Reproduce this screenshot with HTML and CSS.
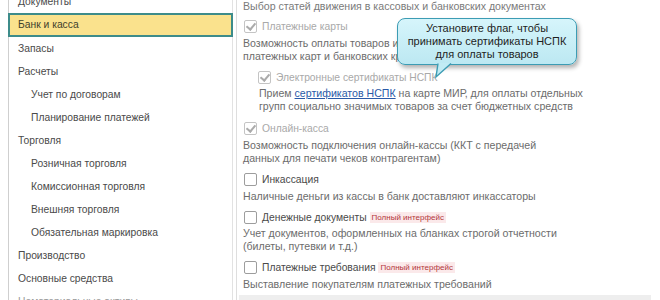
FILE: index.html
```html
<!DOCTYPE html>
<html lang="ru">
<head>
    <meta charset="UTF-8">
    <title>Банк и касса</title>
    <link rel="stylesheet" href="styles.css">
</head>
<body>

    <div class="page">
        <!-- левое меню разделов -->
        <ul class="sections">
            <li>Документы</li>
            <li class="active">Банк и касса</li>
            <li>Запасы</li>
            <li>Расчеты</li>
            <li class="sub">Учет по договорам</li>
            <li class="sub">Планирование платежей</li>
            <li>Торговля</li>
            <li class="sub">Розничная торговля</li>
            <li class="sub">Комиссионная торговля</li>
            <li class="sub">Внешняя торговля</li>
            <li class="sub">Обязательная маркировка</li>
            <li>Производство</li>
            <li>Основные средства</li>
            <li class="faded">Нематериальные активы</li>
        </ul>

        <div class="settings">
            <p class="desc first">Выбор статей движения в кассовых и банковских документах</p>

            <label class="check disabled top"><span class="box on"></span>Платежные карты</label>
            <p class="desc">Возможность оплаты товаров и услуг с использованием<br>платежных карт и банковских кредитов</p>

            <label class="check disabled nested"><span class="box on"></span>Электронные сертификаты НСПК</label>
            <p class="desc nested">Прием <a href="#">сертификатов НСПК</a> на карте МИР, для оплаты отдельных<br>групп социально значимых товаров за счет бюджетных средств</p>

            <label class="check disabled wide"><span class="box on"></span>Онлайн-касса</label>
            <p class="desc">Возможность подключения онлайн-кассы (ККТ с передачей<br>данных для печати чеков контрагентам)</p>

            <label class="check"><span class="box"></span>Инкассация</label>
            <p class="desc">Наличные деньги из кассы в банк доставляют инкассаторы</p>

            <label class="check"><span class="box"></span>Денежные документы <span class="badge">Полный интерфейс</span></label>
            <p class="desc tight">Учет документов, оформленных на бланках строгой отчетности<br>(билеты, путевки и т.д.)</p>

            <label class="check"><span class="box"></span>Платежные требования <span class="badge">Полный интерфейс</span></label>
            <p class="desc">Выставление покупателям платежных требований</p>

            <div class="footer-bar"></div>
        </div>
    </div>

    <div class="hint">
        Установите флаг, чтобы<br>принимать сертификаты НСПК<br>для оплаты товаров
        <svg class="hint-tail" width="24" height="16" viewBox="0 0 24 16">
            <polygon points="3,0 16,0 1,14" fill="#c1ebf4"/>
            <polyline points="3,0.5 1,14 16,0.5" fill="none" stroke="#3c9cb4" stroke-width="1.4"/>
        </svg>
    </div>

</body>
</html>
```

FILE: styles.css
```css
body {
    margin: 0;
    background: #fff;
    font-family: "Liberation Sans", Arial, sans-serif;
    font-size: 10.3px;
    color: #4a4a4a;
    overflow: hidden;
}
.page {
    display: flex;
    align-items: flex-start;
    height: 300px;
    overflow: hidden;
}
.sections {
    list-style: none;
    margin: -10px 0 0 8px;
    padding: 0;
    width: 223px;
    height: 310px;
    border-left: 1px solid #cfcfcf;
    border-right: 1px solid #e2e2e2;
}
.sections li {
    height: 23px;
    line-height: 23px;
    padding-left: 9px;
    white-space: nowrap;
}
.sections li.sub {
    padding-left: 22px;
}
.sections li.active {
    height: 20px;
    line-height: 20px;
    margin: 0 -1px 0 -1px;
    padding-left: 8px;
    background: #fae28d;
    border: 2px solid #3d8c8a;
    color: #3f3f2c;
}
.sections li.faded {
    color: #9a9a9a;
}
.settings {
    margin-left: 3px;
    width: 406px;
    height: 310px;
    padding-left: 6px;
    border-left: 1px solid #dedede;
    display: flex;
    flex-direction: column;
}
.settings > * {
    flex-shrink: 0;
}
.desc {
    margin: 1px 0 0;
    font-size: 10.6px;
    line-height: 13px;
    color: #6c6c6c;
    white-space: nowrap;
}
.desc.first {
    margin-top: 0;
    color: #7a7a7a;
}
.desc.tight,
.desc.nested {
    margin-top: 0;
}
.desc.nested {
    padding-left: 16px;
}
.desc a {
    color: #2a5aa8;
}
.check {
    display: flex;
    align-items: center;
    height: 20px;
    margin-top: 4px;
    padding-left: 1px;
    color: #4a4a4a;
    white-space: nowrap;
}
.check.top {
    margin-top: 3px;
}
.check.nested {
    padding-left: 15px;
}
.check.wide {
    margin-top: 5px;
}
.check.disabled {
    color: #a9a9a9;
}
.box {
    width: 11px;
    height: 11px;
    margin-right: 5px;
    border: 1px solid #9d9d9d;
    border-radius: 2px;
    background: #fff;
    position: relative;
}
.check.disabled .box {
    border-color: #c4c4c4;
}
.box.on::after {
    content: "";
    position: absolute;
    left: 3px;
    top: 0;
    width: 4px;
    height: 7px;
    border-right: 2px solid #ababab;
    border-bottom: 2px solid #ababab;
    transform: rotate(40deg);
}
.badge {
    margin-left: 3px;
    padding: 0 2px;
    font-size: 8px;
    line-height: 11px;
    color: #b3363a;
    background: #fbe9ea;
}
.footer-bar {
    margin: 4px 0 0 -4px;
    width: 412px;
    height: 10px;
    background: #eeeeee;
}
.hint {
    position: absolute;
    left: 397px;
    top: 18px;
    width: 180px;
    height: 47px;
    padding-top: 3px;
    box-sizing: border-box;
    border: 1.5px solid #3c9cb4;
    border-radius: 8px;
    background: linear-gradient(#d6f5fb, #bce8f2);
    box-shadow: 2px 3px 4px rgba(0, 0, 0, 0.3);
    text-align: center;
    font-size: 11px;
    line-height: 13px;
    color: #1e1e1e;
}
.hint-tail {
    position: absolute;
    left: 37px;
    top: 44px;
}
```
